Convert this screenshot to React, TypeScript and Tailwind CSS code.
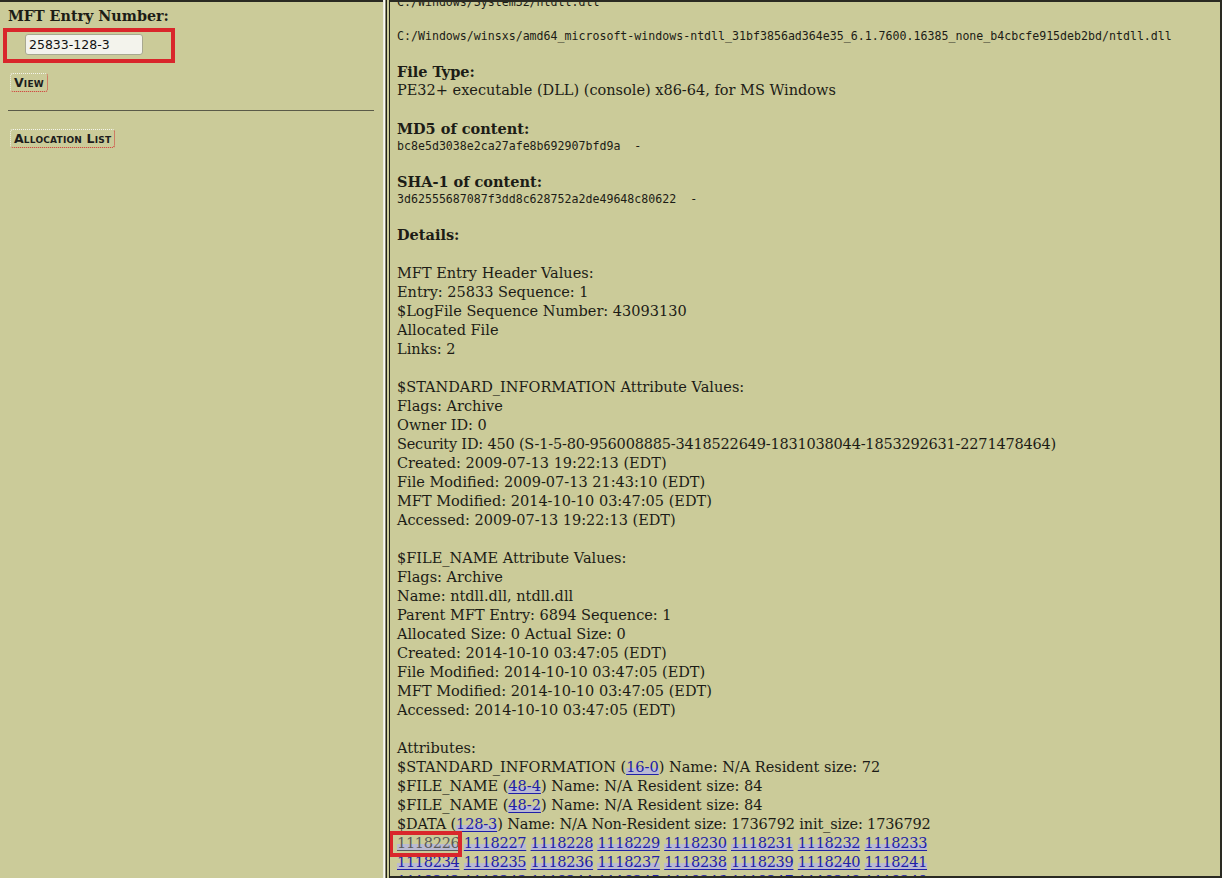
import React from "react";

const serif = "font-['DejaVu_Serif',serif]";
const mono = "font-['DejaVu_Sans_Mono',monospace]";

const Line = ({children, className = ""}: {children?: React.ReactNode; className?: string}) => (
    <div className={`h-[19px] leading-[19px] whitespace-nowrap ${className}`}>{children}</div>
);

const Blank = () => <div className="h-[19px]"></div>;

const Lnk = ({children, visited = false}: {children: React.ReactNode; visited?: boolean}) => (
    <a
        href="#"
        className={`underline underline-offset-[2px] bg-[linear-gradient(transparent_58%,#babad2_58%)] ${visited ? "text-[#5a5a5a]" : "text-[#2020a8]"}`}
    >
        {children}
    </a>
);

const ImgButton = ({label}: {label: string}) => (
    <button
        className="
            h-[19px] px-[3px]
            border border-dotted
            border-t-[#f4f4ec] border-l-[#f4f4ec] border-b-[#d23030] border-r-[#d23030]
            rounded-[3px]
            font-['DejaVu_Sans',sans-serif] font-bold text-[12.5px] leading-[15px]
            text-[#1c1c1c] [font-variant:small-caps] tracking-[0.2px]
        "
    >
        {label}
    </button>
);

const blocks = [
    "1118226", "1118227", "1118228", "1118229", "1118230", "1118231", "1118232", "1118233",
];
const blocks2 = [
    "1118234", "1118235", "1118236", "1118237", "1118238", "1118239", "1118240", "1118241",
];
const blocks3 = [
    "1118242", "1118243", "1118244", "1118245", "1118246", "1118247", "1118248", "1118249",
];

export default function App() {
    return (
        <div className={`flex w-[1222px] h-[878px] bg-[#cbcb99] text-[#1c1c16] ${serif} overflow-hidden`}>
            {/* left frame */}
            <div className="w-[383px] h-full border-t-2 border-[#2a2a22] pl-[8px] pr-[9px]">
                <div className="h-[25px] pt-[5px] text-[14.3px] font-bold leading-[19px]">MFT Entry Number:</div>
                <div className="-ml-[5px] mt-[1px] w-[172px] h-[35px] border-4 border-[#d9262b] pl-[18px]">
                    <input
                        defaultValue="25833-128-3"
                        className="
                            w-[118px] h-[21px] px-[3px]
                            bg-[#f3f3ec] border border-[#a8a890] rounded-[3px]
                            font-['DejaVu_Sans',sans-serif] text-[12.5px] text-[#111]
                            outline-none
                        "
                    />
                </div>
                <div className="flex mt-[10px] ml-[2px] h-[19px]">
                    <ImgButton label="View"/>
                </div>
                <div className="mt-[18px] border-t border-[#5a5a48]"></div>
                <div className="flex mt-[18px] ml-[2px] h-[19px]">
                    <ImgButton label="Allocation List"/>
                </div>
            </div>

            {/* frame divider */}
            <div className="flex h-full">
                <div className="w-px bg-[#ecece0]"></div>
                <div className="w-px bg-[#fafaf4]"></div>
                <div className="w-px bg-[#8a8a70]"></div>
                <div className="w-px bg-[#222219]"></div>
                <div className="w-[2px] bg-[#cbcb99]"></div>
                <div className="w-px bg-[#222219]"></div>
            </div>

            {/* right frame */}
            <div className="flex-1 h-full overflow-hidden border-t-2 border-b-2 border-r-2 border-[#2a2a22] pl-[7px]">
                <div className="-mt-[8px] text-[14.5px]">
                    <div className={`h-[17px] leading-[17px] ${mono} text-[11.6px] whitespace-nowrap`}>C:/Windows/System32/ntdll.dll</div>
                    <div className={`mt-[17px] h-[17px] leading-[17px] ${mono} text-[11.6px] whitespace-nowrap`}>
                        C:/Windows/winsxs/amd64_microsoft-windows-ntdll_31bf3856ad364e35_6.1.7600.16385_none_b4cbcfe915deb2bd/ntdll.dll
                    </div>

                    <Line className="mt-[17px] font-bold">File Type:</Line>
                    <Line>PE32+ executable (DLL) (console) x86-64, for MS Windows</Line>

                    <Line className="mt-[19px] font-bold">MD5 of content:</Line>
                    <div className={`h-[17px] leading-[17px] ${mono} text-[11.6px] whitespace-pre`}>bc8e5d3038e2ca27afe8b692907bfd9a  -</div>

                    <Line className="mt-[17px] font-bold">SHA-1 of content:</Line>
                    <div className={`h-[17px] leading-[17px] ${mono} text-[11.6px] whitespace-pre`}>3d62555687087f3dd8c628752a2de49648c80622  -</div>

                    <Line className="mt-[17px] font-bold">Details:</Line>
                    <div className="pt-px">
                        <Blank/>
                        <Line>MFT Entry Header Values:</Line>
                        <Line>Entry: 25833 Sequence: 1</Line>
                        <Line>$LogFile Sequence Number: 43093130</Line>
                        <Line>Allocated File</Line>
                        <Line>Links: 2</Line>
                        <Blank/>
                        <Line>$STANDARD_INFORMATION Attribute Values:</Line>
                        <Line>Flags: Archive</Line>
                        <Line>Owner ID: 0</Line>
                        <Line className="tracking-[-0.2px]">Security ID: 450 (S-1-5-80-956008885-3418522649-1831038044-1853292631-2271478464)</Line>
                        <Line>Created: 2009-07-13 19:22:13 (EDT)</Line>
                        <Line>File Modified: 2009-07-13 21:43:10 (EDT)</Line>
                        <Line>MFT Modified: 2014-10-10 03:47:05 (EDT)</Line>
                        <Line>Accessed: 2009-07-13 19:22:13 (EDT)</Line>
                        <Blank/>
                        <Line>$FILE_NAME Attribute Values:</Line>
                        <Line>Flags: Archive</Line>
                        <Line>Name: ntdll.dll, ntdll.dll</Line>
                        <Line>Parent MFT Entry: 6894 Sequence: 1</Line>
                        <Line>Allocated Size: 0 Actual Size: 0</Line>
                        <Line>Created: 2014-10-10 03:47:05 (EDT)</Line>
                        <Line>File Modified: 2014-10-10 03:47:05 (EDT)</Line>
                        <Line>MFT Modified: 2014-10-10 03:47:05 (EDT)</Line>
                        <Line>Accessed: 2014-10-10 03:47:05 (EDT)</Line>
                        <Blank/>
                        <Line>Attributes:</Line>
                        <Line>$STANDARD_INFORMATION (<Lnk>16-0</Lnk>) Name: N/A Resident size: 72</Line>
                        <Line>$FILE_NAME (<Lnk>48-4</Lnk>) Name: N/A Resident size: 84</Line>
                        <Line>$FILE_NAME (<Lnk>48-2</Lnk>) Name: N/A Resident size: 84</Line>
                        <Line className="tracking-[-0.15px]">$DATA (<Lnk>128-3</Lnk>) Name: N/A Non-Resident size: 1736792 init_size: 1736792</Line>
                        <Line className="tracking-[-0.3px]">
                            {blocks.map((b, i) => (
                                <React.Fragment key={b}>
                                    {i === 0 ? (
                                        <span className="relative">
                                            <Lnk visited>{b}</Lnk>
                                            <span className="absolute -left-[8px] -right-[3px] -top-[4px] -bottom-[6px] border-4 border-[#d9262b]"></span>
                                        </span>
                                    ) : (
                                        <Lnk>{b}</Lnk>
                                    )}{" "}
                                </React.Fragment>
                            ))}
                        </Line>
                        <Line className="tracking-[-0.3px]">
                            {blocks2.map(b => (
                                <React.Fragment key={b}><Lnk>{b}</Lnk>{" "}</React.Fragment>
                            ))}
                        </Line>
                        <Line className="tracking-[-0.3px]">
                            {blocks3.map(b => (
                                <React.Fragment key={b}><Lnk>{b}</Lnk>{" "}</React.Fragment>
                            ))}
                        </Line>
                    </div>
                </div>
            </div>
        </div>
    );
}
